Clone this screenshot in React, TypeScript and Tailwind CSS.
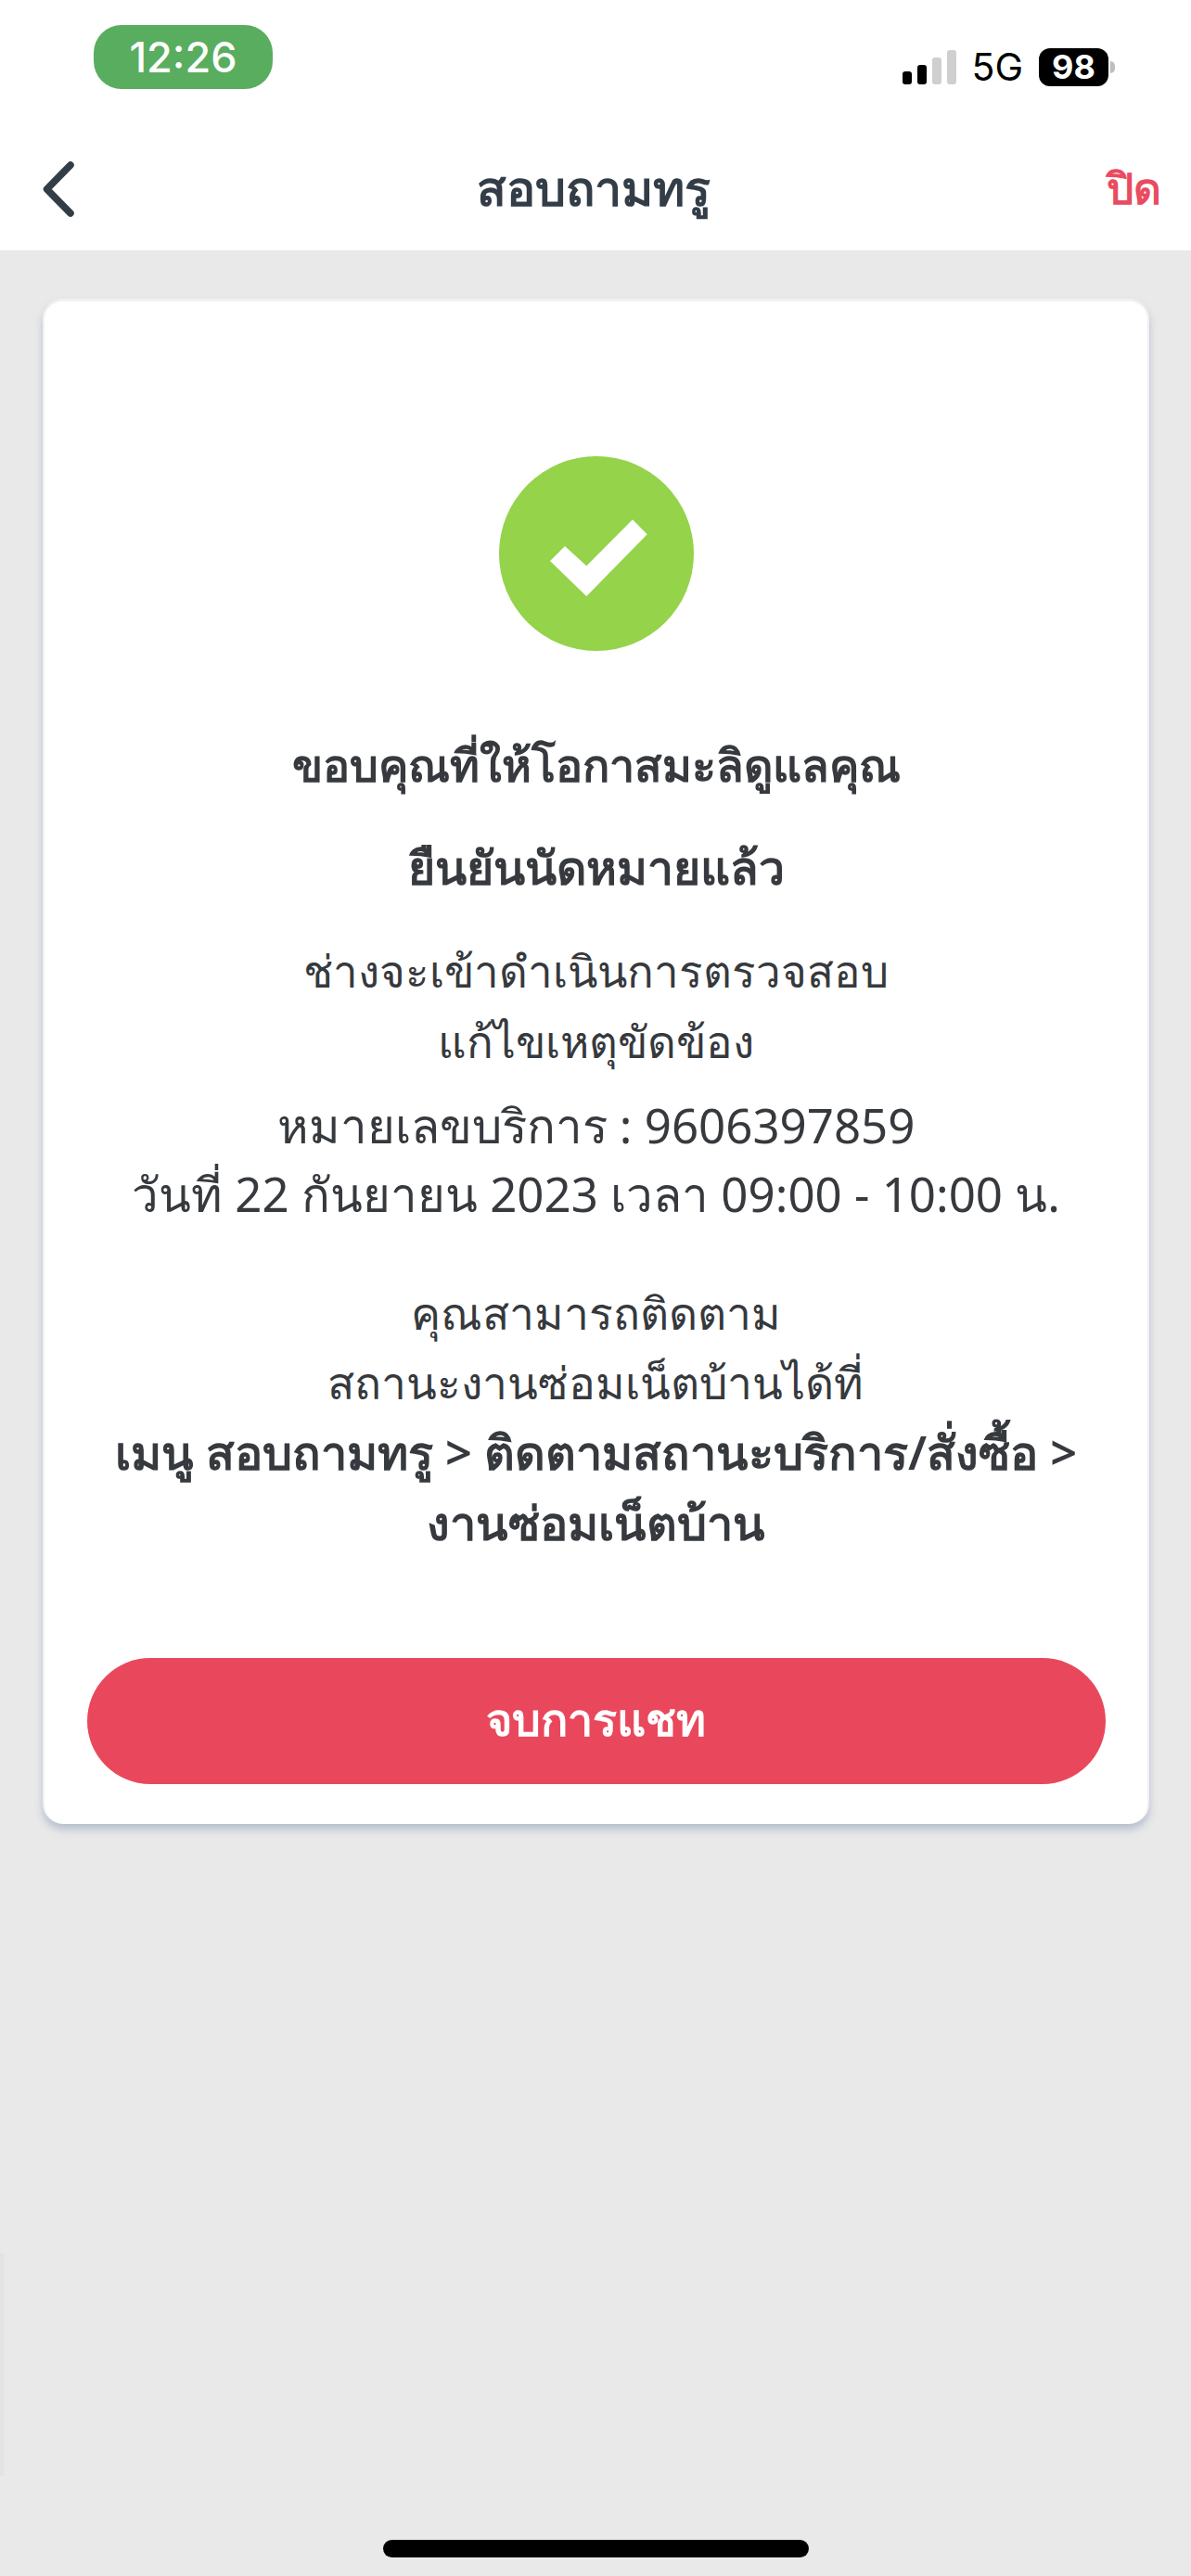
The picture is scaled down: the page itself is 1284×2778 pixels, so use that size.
export default function App() {
  return (
    <div className="relative w-[1284px] h-[2778px] overflow-hidden bg-[#e9e9e9] text-[#36393d] font-['Noto_Sans','Liberation_Sans',sans-serif]">
      <header className="bg-white h-[270px] flex flex-col">
        <div className="h-[150px] relative flex justify-between">
          <div className="ml-[101px] mt-[27px] w-[193px] h-[69px] rounded-[30px] bg-[#59ad5f] text-white text-[45px] font-medium leading-[69px] text-center font-['Inter',sans-serif]">12:26</div>
          <div className="flex items-end mt-[52px] h-[41px] mr-[82px] font-['Inter',sans-serif]">
            <div className="flex items-end gap-[6px] pb-[2px]">
              <span className="block w-[10px] h-[14px] rounded-[3px] bg-black" />
              <span className="block w-[10px] h-[21px] rounded-[3px] bg-black" />
              <span className="block w-[10px] h-[29px] rounded-[3px] bg-[#cfcfcf]" />
              <span className="block w-[10px] h-[37px] rounded-[3px] bg-[#cfcfcf]" />
            </div>
            <span className="ml-[16px] text-[41px] leading-[41px] text-black">5G</span>
            <span className="ml-[17px] w-[75px] h-[41px] rounded-[12px] bg-black text-white text-[36px] leading-[41px] font-bold text-center">98</span>
            <span className="ml-[2px] mb-[14px] w-[5px] h-[13px] rounded-r-full bg-[#bdbdbd]" />
          </div>
        </div>
        <div className="flex-1 flex items-center justify-between relative pb-[12px]">
          <svg width="36" height="60" viewBox="0 0 36 60" className="ml-[45px]" fill="none">
            <path d="M31 4 L5.5 30 L31 56" stroke="#333d47" strokeWidth="7.5" strokeLinecap="round" strokeLinejoin="round" />
          </svg>
          <h1 className="absolute left-0 right-[4px] top-[20px] text-center text-[52px] leading-[64px] font-bold text-[#333d47]">สอบถามทรู</h1>
          <span className="mr-[32px] mb-[5px] text-[#e94b5f] text-[46px] font-bold leading-[60px]">ปิด</span>
        </div>
      </header>
      <main className="ml-[46px] mt-[52px] w-[1193px] h-[1645px] rounded-[22px] bg-white border-t-[3px] border-x-[2px] border-[#f0f1f3] shadow-[0_6px_8px_rgba(150,165,190,0.6)] flex flex-col items-center pt-[167px]">
        <div className="w-[210px] h-[210px] rounded-full bg-[#94d34a] flex items-center justify-center">
          <svg width="210" height="210" viewBox="0 0 210 210">
            <polygon points="55,113 71,97 94.3,118.3 144,68.3 159.7,84.3 94.3,151" fill="#fff" />
          </svg>
        </div>
        <p className="mt-[85px] text-[48.5px] leading-[75px] font-semibold text-center">ขอบคุณที่ให้โอกาสมะลิดูแลคุณ</p>
        <p className="mt-[36px] text-[50px] leading-[75px] font-semibold text-center">ยืนยันนัดหมายแล้ว</p>
        <p className="mt-[36px] text-[47.5px] leading-[76px] font-light text-center">ช่างจะเข้าดำเนินการตรวจสอบ<br />แก้ไขเหตุขัดข้อง</p>
        <p className="mt-[15px] text-[51px] leading-[74px] font-normal text-center">หมายเลขบริการ : 9606397859<br />วันที่ 22 กันยายน 2023 เวลา 09:00 - 10:00 น.</p>
        <p className="mt-[54px] text-[48px] leading-[75px] font-light text-center">คุณสามารถติดตาม<br />สถานะงานซ่อมเน็ตบ้านได้ที่<br /><span className="font-semibold text-[50.5px]">เมนู สอบถามทรู &gt; ติดตามสถานะบริการ/สั่งซื้อ &gt;<br />งานซ่อมเน็ตบ้าน</span></p>
        <button className="mt-[108px] w-[1098px] h-[136px] pb-[6px] rounded-full bg-[#e9485c] text-white text-[48.5px] font-semibold">จบการแชท</button>
      </main>
      <div className="absolute left-0 top-[2430px] w-[4px] h-[240px] bg-[#e3e3e3]" />
      <div className="absolute left-[413px] top-[2739px] w-[459px] h-[19px] rounded-full bg-black" />
    </div>
  );
}
